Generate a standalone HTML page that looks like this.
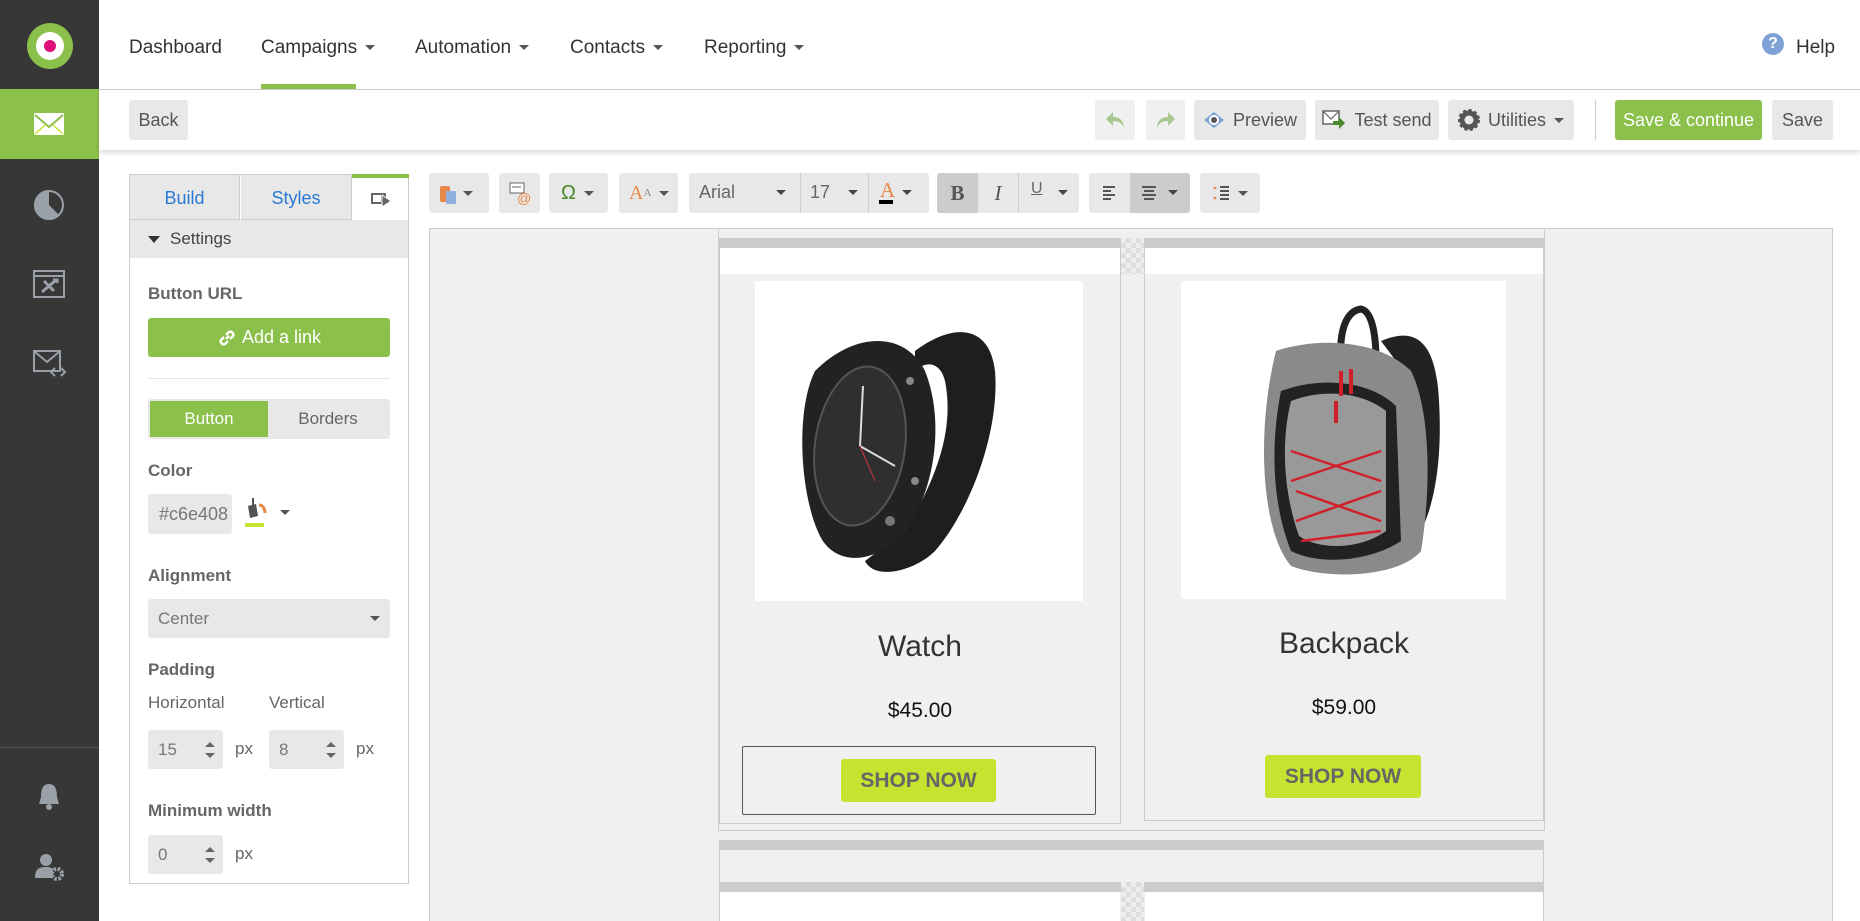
<!DOCTYPE html>
<html style="width:1860px;height:921px;overflow:hidden"><head><meta charset="utf-8"><style>
*{box-sizing:border-box;margin:0;padding:0}
body{width:1860px;height:921px;overflow:hidden;font-family:"Liberation Sans",Arial,sans-serif;background:#fff;position:relative;color:#333}
.a{position:absolute}
.sb{left:0;top:0;width:99px;height:921px;background:#373737}
.nav{font-size:19px;color:#333;top:37px}
.car{display:inline-block;width:0;height:0;border-left:5px solid transparent;border-right:5px solid transparent;border-top:5px solid #555;vertical-align:middle;margin-left:8px}
.btn{background:#e8e8e8;border-radius:3px;font-size:18px;color:#555;display:flex;align-items:center;justify-content:center;height:40px;top:100px}
.tb{background:#e8e8e8;border-radius:3px;height:40px;top:173px;display:flex;align-items:center}
.lbl{font-size:17px;font-weight:bold;color:#666;left:148px}
.inp{background:#e8e8e8;border-radius:3px;font-size:17px;color:#777;display:flex;align-items:center;padding-left:10px}
.spin{position:absolute;right:8px;top:12px;width:10px}
.spin:before{content:"";position:absolute;left:0;top:0;border-left:5px solid transparent;border-right:5px solid transparent;border-bottom:5px solid #666}
.spin:after{content:"";position:absolute;left:0;top:11px;border-left:5px solid transparent;border-right:5px solid transparent;border-top:5px solid #666}
.px{font-size:17px;color:#666}
.shop{background:#c6e42f;border-radius:3px;color:#666;font-weight:bold;font-size:21px;display:flex;align-items:center;justify-content:center}
</style></head><body>
<div class="a sb"></div>
<div class="a" style="left:27px;top:23px;width:46px;height:46px;border-radius:50%;background:#8bc04a"></div>
<div class="a" style="left:36px;top:32px;width:28px;height:28px;border-radius:50%;background:#fff"></div>
<div class="a" style="left:44px;top:40px;width:12px;height:12px;border-radius:50%;background:#e0107a"></div>
<div class="a" style="left:0;top:89px;width:99px;height:70px;background:#8bc04a"></div>
<svg class="a" style="left:33px;top:112px" width="32" height="24"><rect x="1" y="1" width="30" height="22" fill="#fff" rx="1"/><path d="M2 3 L16 15 L30 3" stroke="#8bc04a" stroke-width="2" fill="none"/><path d="M2 22 L12 13 M30 22 L20 13" stroke="#c6e42f" stroke-width="1.5"/></svg>
<svg class="a" style="left:33px;top:189px" width="32" height="32"><circle cx="16" cy="16" r="15" fill="#9aa0a8"/><path d="M16 1 A15 15 0 0 1 27 27 L16 16Z" fill="#373737"/><circle cx="16" cy="16" r="14" fill="none" stroke="#9aa0a8" stroke-width="2"/></svg>
<svg class="a" style="left:33px;top:270px" width="32" height="28"><rect x="1" y="1" width="30" height="26" fill="none" stroke="#9aa0a8" stroke-width="2"/><line x1="1" y1="6" x2="31" y2="6" stroke="#9aa0a8" stroke-width="2"/><path d="M9 22 L23 10 M11 11 L21 21 M20 10 l4 0 0 3" stroke="#9aa0a8" stroke-width="3"/></svg>
<svg class="a" style="left:33px;top:350px" width="34" height="28"><rect x="1" y="1" width="26" height="20" fill="none" stroke="#9aa0a8" stroke-width="2"/><path d="M2 2 L14 12 L26 2" stroke="#9aa0a8" stroke-width="2" fill="none"/><path d="M22 18 l-4 4 4 4 M28 18 l4 4 -4 4" stroke="#9aa0a8" stroke-width="2" fill="none"/></svg>
<div class="a" style="left:0;top:747px;width:99px;height:1px;background:#555"></div>
<svg class="a" style="left:36px;top:782px" width="26" height="30"><path d="M13 2 C6 2 5 9 5 15 L3 22 L23 22 L21 15 C21 9 20 2 13 2Z" fill="#9aa0a8"/><circle cx="13" cy="25" r="3" fill="#9aa0a8"/></svg>
<svg class="a" style="left:34px;top:852px" width="32" height="30"><circle cx="12" cy="8" r="6" fill="#9aa0a8"/><path d="M1 26 C1 16 6 15 12 15 C16 15 18 16 19 17 L19 26Z" fill="#9aa0a8"/><circle cx="23" cy="22" r="5" fill="none" stroke="#9aa0a8" stroke-width="4" stroke-dasharray="2.5 1.5"/><circle cx="23" cy="22" r="2" fill="#373737"/></svg>

<div class="a nav" style="left:129px">Dashboard</div>
<div class="a nav" style="left:261px">Campaigns<span class="car"></span></div>
<div class="a nav" style="left:415px">Automation<span class="car"></span></div>
<div class="a nav" style="left:570px">Contacts<span class="car"></span></div>
<div class="a nav" style="left:704px">Reporting<span class="car"></span></div>
<div class="a" style="left:261px;top:84px;width:95px;height:5px;background:#8bc04a"></div>
<div class="a" style="left:1762px;top:33px;width:22px;height:22px;border-radius:50%;background:#7fa2d6;color:#fff;font-weight:bold;font-size:16px;text-align:center;line-height:22px">?</div>
<div class="a nav" style="left:1796px">Help</div>
<div class="a" style="left:99px;top:89px;width:1761px;height:1px;background:#ccc"></div>

<div class="a" style="left:99px;top:90px;width:1761px;height:60px;background:#fff;box-shadow:0 3px 5px rgba(0,0,0,.15)"></div>
<div class="a btn" style="left:129px;width:59px">Back</div>
<div class="a btn" style="left:1095px;width:40px;background:#f0f0f0"><svg width="22" height="20"><path d="M9 2 L2 9 L9 16 L9 11 C15 11 18 13 20 18 C20 11 16 7 9 7Z" fill="#a8c890"/></svg></div>
<div class="a btn" style="left:1146px;width:39px;background:#f0f0f0"><svg width="22" height="20"><path d="M13 2 L20 9 L13 16 L13 11 C7 11 4 13 2 18 C2 11 6 7 13 7Z" fill="#a8c890"/></svg></div>
<div class="a btn" style="left:1194px;width:112px"><svg width="22" height="18" style="margin-right:8px"><path d="M1 9 L11 1 L21 9 L11 17Z" fill="#7fa2d6"/><circle cx="11" cy="9" r="5" fill="#fff"/><circle cx="11" cy="9" r="3" fill="#555"/></svg>Preview</div>
<div class="a btn" style="left:1315px;width:124px"><svg width="24" height="22" style="margin-right:8px"><rect x="1" y="2" width="16" height="13" fill="#fff" stroke="#666" stroke-width="1.5"/><path d="M1 2 L9 10 L17 2" stroke="#666" stroke-width="1.2" fill="none"/><path d="M11 12 h6 v-4 l6 6 -6 6 v-4 h-6z" fill="#4a8a2a"/></svg>Test send</div>
<div class="a btn" style="left:1448px;width:126px"><svg width="22" height="22" style="margin-right:8px"><circle cx="11" cy="11" r="7" fill="none" stroke="#555" stroke-width="5" /><circle cx="11" cy="11" r="9.5" fill="none" stroke="#555" stroke-width="3" stroke-dasharray="3 2.5"/></svg>Utilities<span class="car"></span></div>
<div class="a" style="left:1595px;top:100px;width:1px;height:40px;background:#ccc"></div>
<div class="a btn" style="left:1615px;width:147px;background:#8bc04a;color:#fff">Save &amp; continue</div>
<div class="a btn" style="left:1772px;width:61px">Save</div>

<div class="a" style="left:129px;top:174px;width:280px;height:710px;border:1px solid #ccc;background:#fff"></div>
<div class="a" style="left:130px;top:175px;width:110px;height:45px;background:#e8e8e8;border-right:1px solid #ccc;border-bottom:1px solid #ccc;color:#2a7ad5;font-size:18px;text-align:center;line-height:46px">Build</div>
<div class="a" style="left:241px;top:175px;width:111px;height:45px;background:#e8e8e8;border-right:1px solid #ccc;border-bottom:1px solid #ccc;color:#2a7ad5;font-size:18px;text-align:center;line-height:46px">Styles</div>
<div class="a" style="left:352px;top:174px;width:57px;height:4px;background:#8bc04a"></div>
<svg class="a" style="left:370px;top:191px" width="22" height="16"><rect x="1" y="2" width="15" height="11" fill="#666"/><rect x="3" y="4" width="8" height="7" fill="#fff"/><path d="M12 4 L21 10 L12 16Z" fill="#666" stroke="#fff"/></svg>
<div class="a" style="left:130px;top:220px;width:278px;height:38px;background:#e8e8e8;font-size:17px;color:#444;line-height:38px;padding-left:18px"><span style="display:inline-block;border-left:6px solid transparent;border-right:6px solid transparent;border-top:7px solid #333;margin-right:10px;vertical-align:middle"></span>Settings</div>
<div class="a lbl" style="top:284px">Button URL</div>
<div class="a" style="left:148px;top:318px;width:242px;height:39px;background:#8bc04a;border-radius:3px;color:#fff;font-size:18px;display:flex;align-items:center;justify-content:center"><svg width="20" height="20" style="margin-right:5px"><path d="M9 11 L12 8 M7 9 L4 12 a3 3 0 0 0 4 4 L11 13 M13 11 L16 8 a3 3 0 0 0 -4 -4 L9 7" stroke="#fff" stroke-width="2.5" fill="none"/></svg>Add a link</div>
<div class="a" style="left:148px;top:378px;width:242px;height:1px;background:#e5e5e5"></div>
<div class="a" style="left:148px;top:399px;width:242px;height:40px;background:#e8e8e8;border-radius:3px"></div>
<div class="a" style="left:150px;top:401px;width:118px;height:36px;background:#8bc04a;color:#fff;font-size:17px;text-align:center;line-height:36px">Button</div>
<div class="a" style="left:268px;top:401px;width:120px;height:36px;color:#666;font-size:17px;text-align:center;line-height:36px">Borders</div>
<div class="a lbl" style="top:461px">Color</div>
<div class="a inp" style="left:148px;top:494px;width:84px;height:40px;overflow:hidden;white-space:nowrap;font-size:18px;padding-left:11px">#c6e408</div>
<svg class="a" style="left:243px;top:496px" width="30" height="34"><path d="M5 10 L13 8 L15 20 L7 22Z" fill="#555"/><line x1="10" y1="2" x2="10" y2="15" stroke="#555" stroke-width="2"/><path d="M16 9 C20 9 22 13 22 17" stroke="#e8884a" stroke-width="3" fill="none"/><rect x="2" y="27" width="19" height="4" fill="#c6e42f"/></svg>
<div class="a" style="left:280px;top:510px;border-left:5px solid transparent;border-right:5px solid transparent;border-top:5px solid #555"></div>
<div class="a lbl" style="top:566px">Alignment</div>
<div class="a inp" style="left:148px;top:599px;width:242px;height:39px">Center<span style="position:absolute;right:10px;top:17px;border-left:5px solid transparent;border-right:5px solid transparent;border-top:5px solid #555"></span></div>
<div class="a lbl" style="top:660px">Padding</div>
<div class="a px" style="left:148px;top:693px">Horizontal</div>
<div class="a px" style="left:269px;top:693px">Vertical</div>
<div class="a inp" style="left:148px;top:730px;width:75px;height:39px">15<span class="spin"></span></div>
<div class="a px" style="left:235px;top:739px">px</div>
<div class="a inp" style="left:269px;top:730px;width:75px;height:39px">8<span class="spin"></span></div>
<div class="a px" style="left:356px;top:739px">px</div>
<div class="a lbl" style="top:801px">Minimum width</div>
<div class="a inp" style="left:148px;top:835px;width:75px;height:39px">0<span class="spin"></span></div>
<div class="a px" style="left:235px;top:844px">px</div>

<div class="a tb" style="left:429px;width:60px;padding-left:10px"><svg width="18" height="22"><rect x="1" y="4" width="10" height="16" rx="2" fill="#e8884a"/><rect x="7" y="9" width="10" height="13" rx="1" fill="#8fb0dc"/></svg><span class="car" style="margin-left:6px"></span></div>
<div class="a tb" style="left:499px;width:41px;justify-content:center"><svg width="24" height="24"><rect x="2" y="2" width="14" height="10" fill="#fff" stroke="#666"/><line x1="4" y1="6" x2="13" y2="6" stroke="#666"/><text x="9" y="22" font-size="14" fill="#e8884a" font-family="Liberation Sans">@</text></svg></div>
<div class="a tb" style="left:549px;width:59px;padding-left:12px;color:#4a8a2a;font-size:20px">Ω<span class="car"></span></div>
<div class="a tb" style="left:619px;width:59px;padding-left:10px;color:#e8884a;font-family:'Liberation Serif',serif;font-size:20px">A<sup style="font-size:11px;color:#888">A</sup><span class="car"></span></div>
<div class="a tb" style="left:689px;width:240px;font-size:18px;color:#666"></div>
<div class="a" style="left:699px;top:182px;font-size:18px;color:#666">Arial</div>
<div class="a" style="left:776px;top:190px;border-left:5px solid transparent;border-right:5px solid transparent;border-top:5px solid #444"></div>
<div class="a" style="left:800px;top:173px;width:1px;height:40px;background:#d0d0d0"></div>
<div class="a" style="left:810px;top:182px;font-size:18px;color:#666">17</div>
<div class="a" style="left:848px;top:190px;border-left:5px solid transparent;border-right:5px solid transparent;border-top:5px solid #444"></div>
<div class="a" style="left:868px;top:173px;width:1px;height:40px;background:#d0d0d0"></div>
<div class="a" style="left:880px;top:178px;font-family:'Liberation Serif',serif;font-size:21px;color:#e8884a">A</div>
<div class="a" style="left:879px;top:200px;width:14px;height:4px;background:#000"></div>
<div class="a" style="left:902px;top:190px;border-left:5px solid transparent;border-right:5px solid transparent;border-top:5px solid #444"></div>
<div class="a tb" style="left:937px;width:142px"></div>
<div class="a" style="left:937px;top:173px;width:41px;height:40px;background:#ccc;border-radius:3px 0 0 3px;text-align:center;line-height:40px;font-family:'Liberation Serif',serif;font-weight:bold;font-size:21px;color:#555">B</div>
<div class="a" style="left:978px;top:173px;width:40px;height:40px;text-align:center;line-height:40px;font-family:'Liberation Serif',serif;font-style:italic;font-size:21px;color:#555">I</div>
<div class="a" style="left:1018px;top:173px;width:1px;height:40px;background:#d0d0d0"></div>
<div class="a" style="left:1031px;top:180px;font-size:16px;color:#666;text-decoration:underline">U</div>
<div class="a" style="left:1058px;top:190px;border-left:5px solid transparent;border-right:5px solid transparent;border-top:5px solid #444"></div>
<div class="a tb" style="left:1089px;width:101px"></div>
<svg class="a" style="left:1102px;top:185px" width="16" height="16"><path d="M1 2h12M1 6h8M1 10h12M1 14h8" stroke="#555" stroke-width="2"/></svg>
<div class="a" style="left:1130px;top:173px;width:60px;height:40px;background:#ccc;border-radius:0 3px 3px 0"></div>
<svg class="a" style="left:1141px;top:185px" width="16" height="16"><path d="M1 2h14M3 6h10M1 10h14M3 14h10" stroke="#555" stroke-width="2"/></svg>
<div class="a" style="left:1168px;top:190px;border-left:5px solid transparent;border-right:5px solid transparent;border-top:5px solid #444"></div>
<div class="a tb" style="left:1200px;width:60px;padding-left:12px"><svg width="18" height="16"><path d="M3 1 l-2 3 h4z M3 15 l-2 -3 h4z" fill="#e8884a"/><path d="M8 2h9M8 6h9M8 10h9M8 14h9" stroke="#555" stroke-width="2"/></svg><span class="car"></span></div>

<div class="a" style="left:429px;top:228px;width:1404px;height:693px;background:#f0f0f0;border:1px solid #ccc;border-bottom:none"></div>
<div class="a" style="left:718px;top:228px;width:827px;height:603px;border-left:1px solid #ccc;border-right:1px solid #ccc;border-bottom:1px solid #ccc"></div>
<div class="a" style="left:1121px;top:238px;width:23px;height:36px;background:repeating-conic-gradient(#ddd 0 25%,#eee 0 50%) 0 0/10px 10px"></div>
<div class="a" style="left:719px;top:238px;width:402px;height:586px;background:#f0f0f0;border:1px solid #ccc"></div>
<div class="a" style="left:719px;top:238px;width:402px;height:10px;background:#ccc"></div>
<div class="a" style="left:720px;top:248px;width:400px;height:26px;background:#fff"></div>
<div class="a" style="left:755px;top:281px;width:328px;height:320px;background:#fff"></div>
<svg class="a" style="left:755px;top:281px" width="328" height="320">
<path d="M160 70 C200 40 235 45 240 90 C245 150 215 230 180 270 C160 290 120 300 110 280 L150 250 C180 200 200 150 190 100 C185 80 170 80 160 90Z" fill="#1e1e1e"/>
<path d="M60 90 C100 50 150 50 170 90 C190 140 180 210 150 250 C120 285 80 285 65 255 C45 215 40 130 60 90Z" fill="#222"/>
<ellipse cx="105" cy="165" rx="45" ry="80" fill="#2f2f2f" stroke="#555" stroke-width="2" transform="rotate(8 105 165)"/>
<path d="M105 165 L108 105 M105 165 L140 185" stroke="#ddd" stroke-width="2"/>
<path d="M105 165 L120 200" stroke="#c33" stroke-width="1"/>
<circle cx="155" cy="100" r="4" fill="#888"/><circle cx="160" cy="200" r="4" fill="#888"/><circle cx="135" cy="240" r="5" fill="#777"/>
</svg>
<div class="a" style="left:719px;top:630px;width:402px;text-align:center;font-size:30px;color:#333">Watch</div>
<div class="a" style="left:719px;top:699px;width:402px;text-align:center;font-size:21px;color:#111">$45.00</div>
<div class="a" style="left:742px;top:746px;width:354px;height:69px;border:1px solid #555;border-radius:2px"></div>
<div class="a shop" style="left:841px;top:759px;width:155px;height:43px">SHOP NOW</div>
<div class="a" style="left:1144px;top:238px;width:400px;height:583px;background:#f0f0f0;border:1px solid #ccc"></div>
<div class="a" style="left:1144px;top:238px;width:400px;height:10px;background:#ccc"></div>
<div class="a" style="left:1145px;top:248px;width:398px;height:26px;background:#fff"></div>
<div class="a" style="left:1181px;top:281px;width:325px;height:318px;background:#fff"></div>
<svg class="a" style="left:1181px;top:281px" width="325" height="318">
<path d="M160 80 C158 50 165 30 180 28 C190 30 195 50 195 80" stroke="#222" stroke-width="7" fill="none"/>
<path d="M200 60 C235 45 255 60 258 120 C262 190 250 230 240 250 L220 250 L215 80Z" fill="#222"/>
<path d="M95 70 C140 55 200 60 230 90 C250 130 250 210 240 270 C220 295 150 300 110 285 C80 250 75 150 95 70Z" fill="#8a8a8a"/>
<path d="M100 110 C140 95 190 100 215 125 L220 260 C190 280 140 285 110 270 C90 220 90 160 100 110Z" fill="#222"/>
<path d="M110 120 C140 108 180 110 205 130 L205 250 C180 268 140 270 118 255 C102 210 100 160 110 120Z" fill="#999"/>
<path d="M110 170 L200 200 M110 200 L200 170 M115 210 L200 240 M115 240 L200 210 M120 260 L200 250" stroke="#d0202a" stroke-width="2.5"/>
<path d="M160 90 l0 25 M170 88 l0 25 M155 120 l0 22" stroke="#d0202a" stroke-width="4"/>
</svg>
<div class="a" style="left:1144px;top:627px;width:400px;text-align:center;font-size:30px;color:#333">Backpack</div>
<div class="a" style="left:1144px;top:696px;width:400px;text-align:center;font-size:21px;color:#111">$59.00</div>
<div class="a shop" style="left:1265px;top:755px;width:156px;height:43px">SHOP NOW</div>
<div class="a" style="left:719px;top:840px;width:825px;height:81px;border:1px solid #ccc;border-bottom:none;background:#f0f0f0"></div>
<div class="a" style="left:719px;top:840px;width:825px;height:10px;background:#ccc"></div>
<div class="a" style="left:719px;top:882px;width:402px;height:10px;background:#ccc"></div>
<div class="a" style="left:720px;top:892px;width:400px;height:29px;background:#fff"></div>
<div class="a" style="left:1121px;top:882px;width:23px;height:39px;background:repeating-conic-gradient(#ddd 0 25%,#eee 0 50%) 0 0/10px 10px"></div>
<div class="a" style="left:1144px;top:882px;width:400px;height:10px;background:#ccc"></div>
<div class="a" style="left:1145px;top:892px;width:398px;height:29px;background:#fff"></div>
</body></html>
